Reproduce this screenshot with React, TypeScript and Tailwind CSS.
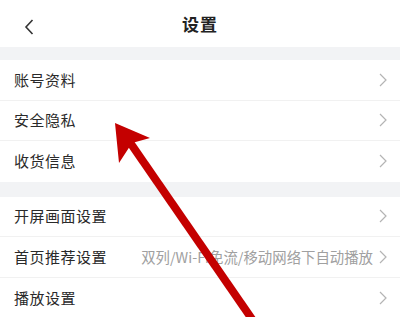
const groups = [
  [
    { label: "账号资料" },
    { label: "安全隐私" },
    { label: "收货信息" },
  ],
  [
    { label: "开屏画面设置" },
    { label: "首页推荐设置", value: "双列/Wi-Fi免流/移动网络下自动播放" },
    { label: "播放设置" },
  ],
];

function Chevron() {
  return (
    <svg width="8" height="14" viewBox="0 0 8 14" className="shrink-0">
      <path d="M1 1l6 6-6 6" fill="none" stroke="#b4b4b4" strokeWidth="1.2" />
    </svg>
  );
}

export default function App() {
  return (
    <div
      className="relative w-[400px] h-[317px] overflow-hidden bg-white text-[#222]"
      style={{ fontFamily: '"Noto Sans CJK SC", "Noto Sans", sans-serif' }}
    >
      {/* 顶栏 */}
      <div className="relative h-[47px] flex items-center justify-center">
        <svg width="10" height="16" viewBox="0 0 10 16" className="absolute left-[24px] top-[19px]">
          <path d="M8.5 1L2 8l6.5 7" fill="none" stroke="#333" strokeWidth="1.6" />
        </svg>
        <span className="text-[17px] font-bold tracking-[1px]">设置</span>
      </div>

      {groups.map((rows, gi) => (
        <div key={gi}>
          <div className={gi === 0 ? "h-[13px] bg-[#f2f3f5]" : "h-[15px] bg-[#f2f3f5]"} />
          {rows.map((r, i) => (
            <div
              key={r.label}
              className={
                "h-[40.5px] flex items-center pl-[14px] pr-[13px] " +
                (i < rows.length - 1 ? "border-b border-[#f1f1f1]" : "")
              }
            >
              <span className="text-[15px] text-[#2a2a2a] tracking-[0.5px]">{r.label}</span>
              <div className="flex-1" />
              {r.value && (
                <span className="text-[14.4px] text-[#a0a0a0] mr-[6px] whitespace-nowrap">{r.value}</span>
              )}
              <Chevron />
            </div>
          ))}
        </div>
      ))}

      {/* 红色箭头标注 */}
      <svg
        width="400"
        height="317"
        viewBox="0 0 400 317"
        className="absolute left-0 top-0 pointer-events-none"
      >
        <line x1="129" y1="141" x2="254" y2="322" stroke="#c40000" strokeWidth="8" />
        <polygon points="115,123 150,138 132,143 119,163" fill="#c40000" />
      </svg>
    </div>
  );
}
